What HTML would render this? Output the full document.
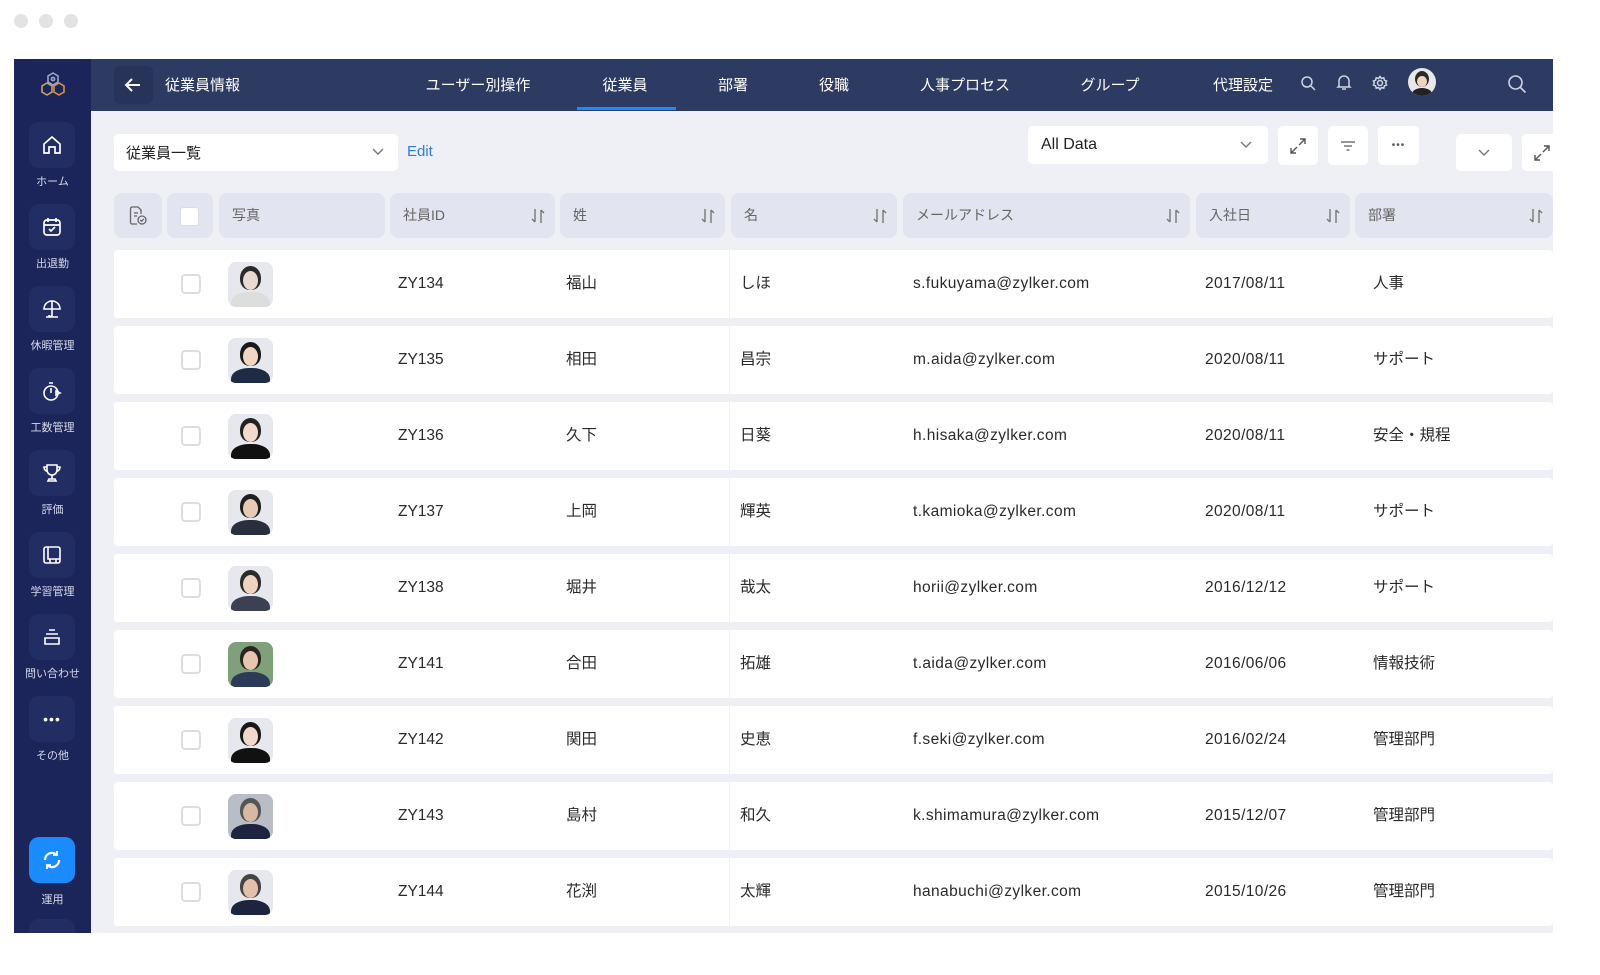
<!DOCTYPE html>
<html><head><meta charset="utf-8"><style>
*{margin:0;padding:0;box-sizing:border-box}
body{width:1600px;height:975px;background:#fff;font-family:"Liberation Sans","Noto Sans CJK JP",sans-serif;position:relative;overflow:hidden;color:#333}
.a{position:absolute}
.dot{position:absolute;top:14px;width:14px;height:14px;border-radius:50%;background:#e3e3e3}
#side{left:14px;top:59px;width:77px;height:874px;background:#1c2559}
.sb{position:absolute;left:15px;width:46px;height:46px;border-radius:10px;background:#222d64;display:flex;align-items:center;justify-content:center}
.sl{position:absolute;left:0;width:77px;text-align:center;font-size:11px;color:#d5d9ea}
#top{left:91px;top:59px;width:1462px;height:52px;background:#2d3a62}
.nav{position:absolute;top:74px;font-size:15px;color:#fff;transform:translateX(-50%);white-space:nowrap}
#main{left:91px;top:111px;width:1462px;height:822px;background:#eef0f5}
.hc{position:absolute;top:193px;height:45px;background:#e2e4ef;border-radius:8px;font-size:14px;color:#666;line-height:45px;padding-left:13px}
.so{position:absolute;right:10px;top:15px}
.row{position:absolute;left:114px;width:1439px;height:68px;background:#fff;border-radius:4px}
.row .t{position:absolute;top:0;line-height:68px;font-size:15.5px;color:#2a2a2a;white-space:nowrap}
.cb{position:absolute;left:67px;top:24px;width:20px;height:20px;border:2px solid #dcdde2;border-radius:4px}
.ph{position:absolute;left:114px;top:12px;width:45px;height:45px;border-radius:8px;overflow:hidden;background:#dfe3ea}
.btn{position:absolute;background:#fff;border-radius:5px;display:flex;align-items:center;justify-content:center}
</style></head><body>
<div class="dot" style="left:14px"></div><div class="dot" style="left:39px"></div><div class="dot" style="left:64px"></div>

<div id="side" class="a">
 <svg class="a" style="left:24px;top:12px" width="30" height="28" viewBox="0 0 30 28" fill="none" stroke-width="1.6"><path d="M15 2l5 3v6l-5 3-5-3V5z" stroke="#9aa3c8"/><path d="M9 12l5 3v6l-5 3-5-3v-6z" stroke="#c7a26a"/><path d="M21 12l5 3v6l-5 3-5-3v-6z" stroke="#d8914e"/><circle cx="15" cy="8" r="1.6" stroke="#9aa3c8"/></svg>
 <div class="sb" style="top:63px"><svg width="22" height="22" viewBox="0 0 22 22" fill="none" stroke="#fff" stroke-width="1.7"><path d="M3 10l8-7 8 7v9h-5v-6h-6v6H3z"/></svg></div><div class="sl" style="top:114px">ホーム</div>
 <div class="sb" style="top:145px"><svg width="22" height="22" viewBox="0 0 22 22" fill="none" stroke="#fff" stroke-width="1.7"><rect x="3" y="4" width="16" height="15" rx="3"/><path d="M3 9h16M7 2v4M15 2v4M8 13l2 2 4-4"/></svg></div><div class="sl" style="top:196px">出退勤</div>
 <div class="sb" style="top:227px"><svg width="22" height="22" viewBox="0 0 22 22" fill="none" stroke="#fff" stroke-width="1.6"><path d="M3 11a8 8 0 0116 0zM11 3v14c0 2-3 2-3 0M5 19h12"/></svg></div><div class="sl" style="top:278px">休暇管理</div>
 <div class="sb" style="top:309px"><svg width="22" height="22" viewBox="0 0 22 22" fill="none" stroke="#fff" stroke-width="1.6"><circle cx="10" cy="13" r="7"/><path d="M8 3h4M10 8v5M15 11l4 2-4 2z"/></svg></div><div class="sl" style="top:360px">工数管理</div>
 <div class="sb" style="top:391px"><svg width="22" height="22" viewBox="0 0 22 22" fill="none" stroke="#fff" stroke-width="1.6"><path d="M6 3h10v5a5 5 0 01-10 0zM6 5H3c0 3 2 4 3 4M16 5h3c0 3-2 4-3 4M11 13v4M7 19h8l-1-2H8z"/></svg></div><div class="sl" style="top:442px">評価</div>
 <div class="sb" style="top:473px"><svg width="22" height="22" viewBox="0 0 22 22" fill="none" stroke="#fff" stroke-width="1.6"><rect x="3" y="3" width="16" height="16" rx="2"/><path d="M7 3v12h12M9 15v4M15 15v4"/></svg></div><div class="sl" style="top:524px">学習管理</div>
 <div class="sb" style="top:555px"><svg width="22" height="22" viewBox="0 0 22 22" fill="none" stroke="#fff" stroke-width="1.6"><path d="M8 4h6M5 8h12M4 12h14v6H4z"/></svg></div><div class="sl" style="top:606px">問い合わせ</div>
 <div class="sb" style="top:637px;color:#fff;font-size:14px;letter-spacing:1px">•••</div><div class="sl" style="top:688px">その他</div>
 <div class="sb" style="top:778px;background:#1a8cff"><svg width="22" height="22" viewBox="0 0 22 22" fill="none" stroke="#fff" stroke-width="2.2"><path d="M4 11a7 7 0 0112-5M18 11a7 7 0 01-12 5"/><path d="M16 2v4h-4M6 20v-4h4" stroke-width="1.8"/></svg></div><div class="sl" style="top:832px">運用</div>
 <div class="sb" style="top:860px;height:14px;border-radius:10px 10px 0 0"></div>
</div>

<div id="top" class="a"></div>
<div class="a" style="left:114px;top:66px;width:39px;height:38px;background:#28335a;border-radius:6px"></div>
<svg class="a" style="left:124px;top:76px" width="18" height="18" viewBox="0 0 18 18" fill="none" stroke="#fff" stroke-width="2"><path d="M16 9H3M8 3L2 9l6 6"/></svg>
<div class="a" style="left:165px;top:74px;font-size:15px;color:#fff">従業員情報</div>
<div class="nav" style="left:478px">ユーザー別操作</div>
<div class="nav" style="left:625px">従業員</div>
<div class="a" style="left:577px;top:107px;width:99px;height:3px;background:#1a8cff"></div>
<div class="nav" style="left:733px">部署</div>
<div class="nav" style="left:834px">役職</div>
<div class="nav" style="left:965px">人事プロセス</div>
<div class="nav" style="left:1110px">グループ</div>
<div class="nav" style="left:1243px">代理設定</div>
<svg class="a" style="left:1300px;top:75px" width="16" height="16" viewBox="0 0 16 16" fill="none" stroke="#cfd4e6" stroke-width="1.5"><circle cx="7" cy="7" r="5"/><path d="M11 11l4 4"/></svg>
<svg class="a" style="left:1336px;top:74px" width="16" height="17" viewBox="0 0 16 17" fill="none" stroke="#cfd4e6" stroke-width="1.5"><path d="M3 12V7a5 5 0 0110 0v5l1 1H2zM6 15h4"/></svg>
<svg class="a" style="left:1372px;top:75px" width="16" height="16" viewBox="0 0 16 16" fill="none" stroke="#cfd4e6" stroke-width="1.5"><circle cx="8" cy="8" r="2.5"/><path d="M8 1.5l1.5 2 2.3-.7.6 2.4 2.2.8-1 2 1 2-2.2.8-.6 2.4-2.3-.7L8 14.5l-1.5-2-2.3.7-.6-2.4-2.2-.8 1-2-1-2 2.2-.8.6-2.4 2.3.7z"/></svg>
<div class="a" style="left:1408px;top:68px;width:28px;height:28px;border-radius:50%;background:#e8e8ea;overflow:hidden"><div class="a" style="left:7px;top:3px;width:14px;height:16px;border-radius:50%;background:#2a2a2a"></div><div class="a" style="left:9px;top:8px;width:10px;height:11px;border-radius:50%;background:#f0d4c0"></div><div class="a" style="left:4px;top:20px;width:20px;height:12px;border-radius:50%;background:#222"></div></div>
<svg class="a" style="left:1507px;top:74px" width="20" height="20" viewBox="0 0 20 20" fill="none" stroke="#cfd4e6" stroke-width="1.6"><circle cx="8.5" cy="8.5" r="6.5"/><path d="M13.5 13.5l5 5"/></svg>

<div id="main" class="a"></div>
<div class="btn" style="left:114px;top:134px;width:284px;height:37px;justify-content:flex-start;padding-left:12px;font-size:15px;color:#222">従業員一覧
 <svg class="a" style="left:258px;top:14px" width="12" height="8" viewBox="0 0 12 8" fill="none" stroke="#777" stroke-width="1.4"><path d="M1 1l5 5 5-5"/></svg></div>
<div class="a" style="left:407px;top:143px;font-size:15px;color:#2f7fd8">Edit</div>
<div class="btn" style="left:1028px;top:126px;width:240px;height:38px;justify-content:flex-start;padding-left:13px;font-size:16px;color:#222">All Data
 <svg class="a" style="left:212px;top:15px" width="12" height="8" viewBox="0 0 12 8" fill="none" stroke="#777" stroke-width="1.4"><path d="M1 1l5 5 5-5"/></svg></div>
<div class="btn" style="left:1278px;top:126px;width:40px;height:39px"><svg width="20" height="20" viewBox="0 0 20 20" fill="none" stroke="#555" stroke-width="1.4"><path d="M12 3h5v5M17 3l-6 6M8 17H3v-5M3 17l6-6"/></svg></div>
<div class="btn" style="left:1328px;top:126px;width:40px;height:39px"><svg width="16" height="12" viewBox="0 0 16 12" fill="none" stroke="#777" stroke-width="1.4"><path d="M1 2h14M4 6h8M6.5 10h3"/></svg></div>
<div class="btn" style="left:1378px;top:126px;width:41px;height:39px;font-size:10px;color:#555;letter-spacing:1px">•••</div>
<div class="btn" style="left:1456px;top:134px;width:56px;height:37px"><svg width="12" height="8" viewBox="0 0 12 8" fill="none" stroke="#777" stroke-width="1.4"><path d="M1 1l5 5 5-5"/></svg></div>
<div class="btn" style="left:1522px;top:134px;width:40px;height:37px;justify-content:flex-start;padding-left:10px"><svg width="20" height="20" viewBox="0 0 20 20" fill="none" stroke="#555" stroke-width="1.4"><path d="M12 3h5v5M17 3l-6 6M8 17H3v-5M3 17l6-6"/></svg></div>

<div class="hc" style="left:114px;width:48px;padding-left:14px"><svg style="margin-top:13px" width="20" height="20" viewBox="0 0 20 20" fill="none" stroke="#666" stroke-width="1.3"><path d="M13 8V4l-3-3H4a1.5 1.5 0 00-1.5 1.5v14A1.5 1.5 0 004 18h5"/><path d="M6 7h4M6 10h3"/><circle cx="14" cy="14" r="4"/><path d="M12.3 14l1.2 1.2 2.2-2.2"/></svg></div>
<div class="hc" style="left:167px;width:46px"><div class="a" style="left:13px;top:14px;width:19px;height:19px;background:#fff;border-radius:3px;border:1px solid #ddd"></div></div>
<div class="hc" style="left:219px;width:166px">写真</div>
<div class="hc" style="left:390px;width:165px">社員ID<svg class="so" width="14" height="16" viewBox="0 0 14 16" fill="none" stroke="#777" stroke-width="1.4"><path d="M4 1v13M1 11l3 3M10 15V2M13 5l-3-3"/></svg></div>
<div class="hc" style="left:560px;width:165px">姓<svg class="so" width="14" height="16" viewBox="0 0 14 16" fill="none" stroke="#777" stroke-width="1.4"><path d="M4 1v13M1 11l3 3M10 15V2M13 5l-3-3"/></svg></div>
<div class="hc" style="left:731px;width:166px">名<svg class="so" width="14" height="16" viewBox="0 0 14 16" fill="none" stroke="#777" stroke-width="1.4"><path d="M4 1v13M1 11l3 3M10 15V2M13 5l-3-3"/></svg></div>
<div class="hc" style="left:903px;width:287px">メールアドレス<svg class="so" width="14" height="16" viewBox="0 0 14 16" fill="none" stroke="#777" stroke-width="1.4"><path d="M4 1v13M1 11l3 3M10 15V2M13 5l-3-3"/></svg></div>
<div class="hc" style="left:1196px;width:154px">入社日<svg class="so" width="14" height="16" viewBox="0 0 14 16" fill="none" stroke="#777" stroke-width="1.4"><path d="M4 1v13M1 11l3 3M10 15V2M13 5l-3-3"/></svg></div>
<div class="hc" style="left:1355px;width:198px">部署<svg class="so" width="14" height="16" viewBox="0 0 14 16" fill="none" stroke="#777" stroke-width="1.4"><path d="M4 1v13M1 11l3 3M10 15V2M13 5l-3-3"/></svg></div>

<div id="rows"></div>
<script>
var d=[["ZY134","福山","しほ","s.fukuyama@zylker.com","2017/08/11","人事","#2a2a2a","#e9d9cf","#ddd"],
["ZY135","相田","昌宗","m.aida@zylker.com","2020/08/11","サポート","#1a1a1a","#f1d6c3","#1f2a44"],
["ZY136","久下","日葵","h.hisaka@zylker.com","2020/08/11","安全・規程","#222","#f2dacb","#111"],
["ZY137","上岡","輝英","t.kamioka@zylker.com","2020/08/11","サポート","#1f1f1f","#e8c9b4","#2a2f40"],
["ZY138","堀井","哉太","horii@zylker.com","2016/12/12","サポート","#2b2b2b","#efd3c0","#3b4052"],
["ZY141","合田","拓雄","t.aida@zylker.com","2016/06/06","情報技術","#2a2520","#e7c6ae","#2d3a58"],
["ZY142","関田","史恵","f.seki@zylker.com","2016/02/24","管理部門","#181818","#f2d8c8","#111"],
["ZY143","島村","和久","k.shimamura@zylker.com","2015/12/07","管理部門","#555","#d9b8a2","#1d2440"],
["ZY144","花渕","太輝","hanabuchi@zylker.com","2015/10/26","管理部門","#444","#e4c0a8","#1d2440"]];
var h="";
d.forEach(function(r,i){var y=250+i*76;
h+='<div class="row" style="top:'+y+'px"><div class="cb"></div>'+
'<div class="ph" style="background:'+(i==5?'#7fa07a':i==7?'#b8bdc6':'#e6e8ee')+'"><div class="a" style="left:12px;top:4px;width:21px;height:24px;border-radius:50% 50% 45% 45%;background:'+r[6]+'"></div><div class="a" style="left:15px;top:9px;width:15px;height:19px;border-radius:50%;background:'+r[7]+'"></div><div class="a" style="left:3px;top:30px;width:39px;height:24px;border-radius:45% 45% 0 0;background:'+r[8]+'"></div></div>'+
'<div class="t" style="left:284px">'+r[0]+'</div><div class="t" style="left:452px">'+r[1]+'</div>'+
'<div class="a" style="left:615px;top:0;width:1px;height:68px;background:#f0f1f4"></div>'+
'<div class="t" style="left:626px">'+r[2]+'</div><div class="t" style="left:799px;letter-spacing:.4px">'+r[3]+'</div>'+
'<div class="t" style="left:1091px;letter-spacing:.4px">'+r[4]+'</div><div class="t" style="left:1259px">'+r[5]+'</div></div>';});
document.getElementById("rows").innerHTML=h;
</script>
</body></html>
